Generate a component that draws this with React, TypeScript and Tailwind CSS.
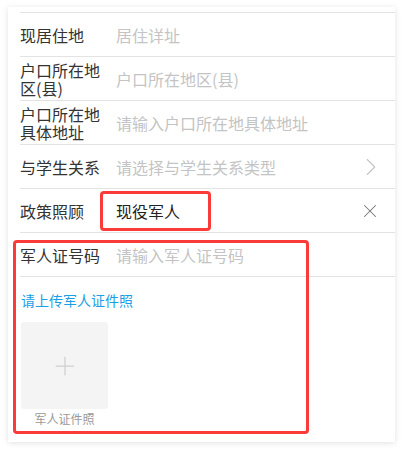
import { ChevronRight, X, Plus } from 'lucide-react';

const rows = [
  { label: '现居住地', placeholder: '居住详址' },
  { label: '户口所在地区(县)', placeholder: '户口所在地区(县)' },
  { label: '户口所在地具体地址', placeholder: '请输入户口所在地具体地址' },
];

function Row({ label, children, right }: { label: string; children: React.ReactNode; right?: React.ReactNode }) {
  return (
    <div className="flex h-[44px] items-center border-b border-[#e3e3e3] pr-3">
      <div className="w-[80px] shrink-0 text-[16px] leading-[18px] text-[#333]">{label}</div>
      <div className="ml-4 flex-1 text-[16px] leading-[18px]">{children}</div>
      {right}
    </div>
  );
}

export default function App() {
  return (
    <div className="min-h-[453px] bg-white pt-[7px] pl-2 pr-[10px] pb-[10px] font-['Noto_Sans_CJK_SC',_'Noto_Sans',_sans-serif]">
      <div className="relative bg-white pl-3 pt-[5px] shadow-[0_1px_6px_rgba(0,0,0,0.12)]">
        <div className="border-t border-[#e3e3e3]" />
        {rows.map((r) => (
          <Row key={r.label} label={r.label}>
            <span className="text-[#c4c4c4]">{r.placeholder}</span>
          </Row>
        ))}
        <Row
          label="与学生关系"
          right={<ChevronRight size={30} strokeWidth={0.9} className="-mr-[3px] text-[#c4c4c4]" />}
        >
          <span className="text-[#c4c4c4]">请选择与学生关系类型</span>
        </Row>
        <Row label="政策照顾" right={<X size={22} strokeWidth={1.1} className="mr-[2px] text-[#777]" />}>
          <span className="text-[#222]">现役军人</span>
        </Row>
        <Row label="军人证号码">
          <span className="text-[#c4c4c4]">请输入军人证号码</span>
        </Row>
        <div className="pt-[13px] pb-[15px] pl-[1px]">
          <div className="text-[14px] leading-[20px] text-[#1a9ee4]">请上传军人证件照</div>
          <div className="mt-[12px] flex w-[87px] flex-col items-center">
            <div className="flex h-[87px] w-[87px] items-center justify-center rounded-[3px] bg-[#f4f4f4]">
              <Plus size={30} strokeWidth={1} className="text-[#cfcfcf]" />
            </div>
            <div className="mt-[2px] text-[12px] leading-[16px] text-[#999]">军人证件照</div>
          </div>
        </div>

        <div className="pointer-events-none absolute left-[92px] top-[184px] h-[40px] w-[111px] rounded-[4px] border-[3px] border-[#fb3a3a]" />
        <div className="pointer-events-none absolute left-[5px] top-[233px] h-[194px] w-[296px] rounded-[4px] border-[3px] border-[#fb3a3a]" />
      </div>
    </div>
  );
}
